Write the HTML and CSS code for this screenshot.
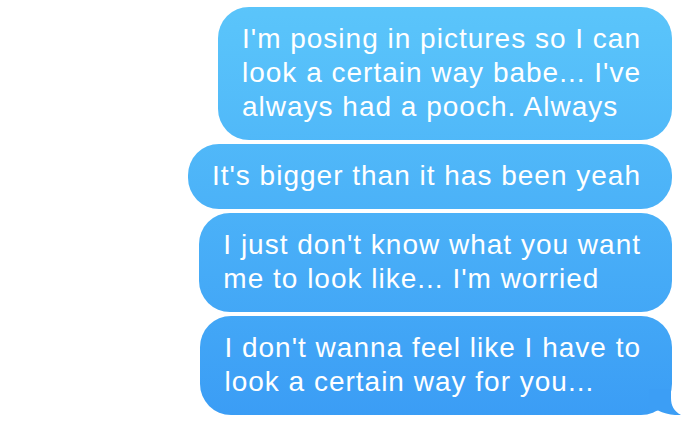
FILE: index.html
```html
<!DOCTYPE html>
<html lang="en">
<head>
    <meta charset="UTF-8">
    <meta name="viewport" content="width=device-width, initial-scale=1.0">
    <title>Messages</title>
    <link rel="stylesheet" href="styles.css">
</head>
<body>
    <div class="thread">
        <div class="bubble">I'm posing in pictures so I can<br>look a certain way babe... I've<br>always had a pooch. Always</div>
        <div class="bubble">It's bigger than it has been yeah</div>
        <div class="bubble">I just don't know what you want<br>me to look like... I'm worried</div>
        <div class="bubble last">
            I don't wanna feel like I have to<br>look a certain way for you...
            <svg class="tail" width="34" height="26" viewBox="0 0 34 26">
                <path d="M22,0 L22,9 C22,17 25,22 32,26 C24,26.5 16,25 9,21.5 L0,21.5 L0,0 Z" fill="#3c9ef5"/>
            </svg>
        </div>
    </div>
</body>
</html>
```

FILE: styles.css
```css
* {
    box-sizing: border-box;
    margin: 0;
    padding: 0;
}
body {
    background-color: #fff;
    font-family: "Liberation Sans", Arial, sans-serif;
    width: 700px;
    height: 426px;
    overflow: hidden;
}
.thread {
    display: flex;
    flex-direction: column;
    align-items: flex-end;
    gap: 4px;
    padding: 7px 28px 0 0;
}
.bubble {
    position: relative;
    white-space: nowrap;
    color: #fff;
    font-size: 28px;
    letter-spacing: 1px;
    line-height: 34px;
    padding: 15px 31px 16px 24px;
    border-radius: 31px;
    background: linear-gradient(#5bc5fa, #58c2fa 10%, #3a9cf5 100%) fixed;
}
.tail {
    position: absolute;
    right: -11px;
    bottom: 0;
}
```
